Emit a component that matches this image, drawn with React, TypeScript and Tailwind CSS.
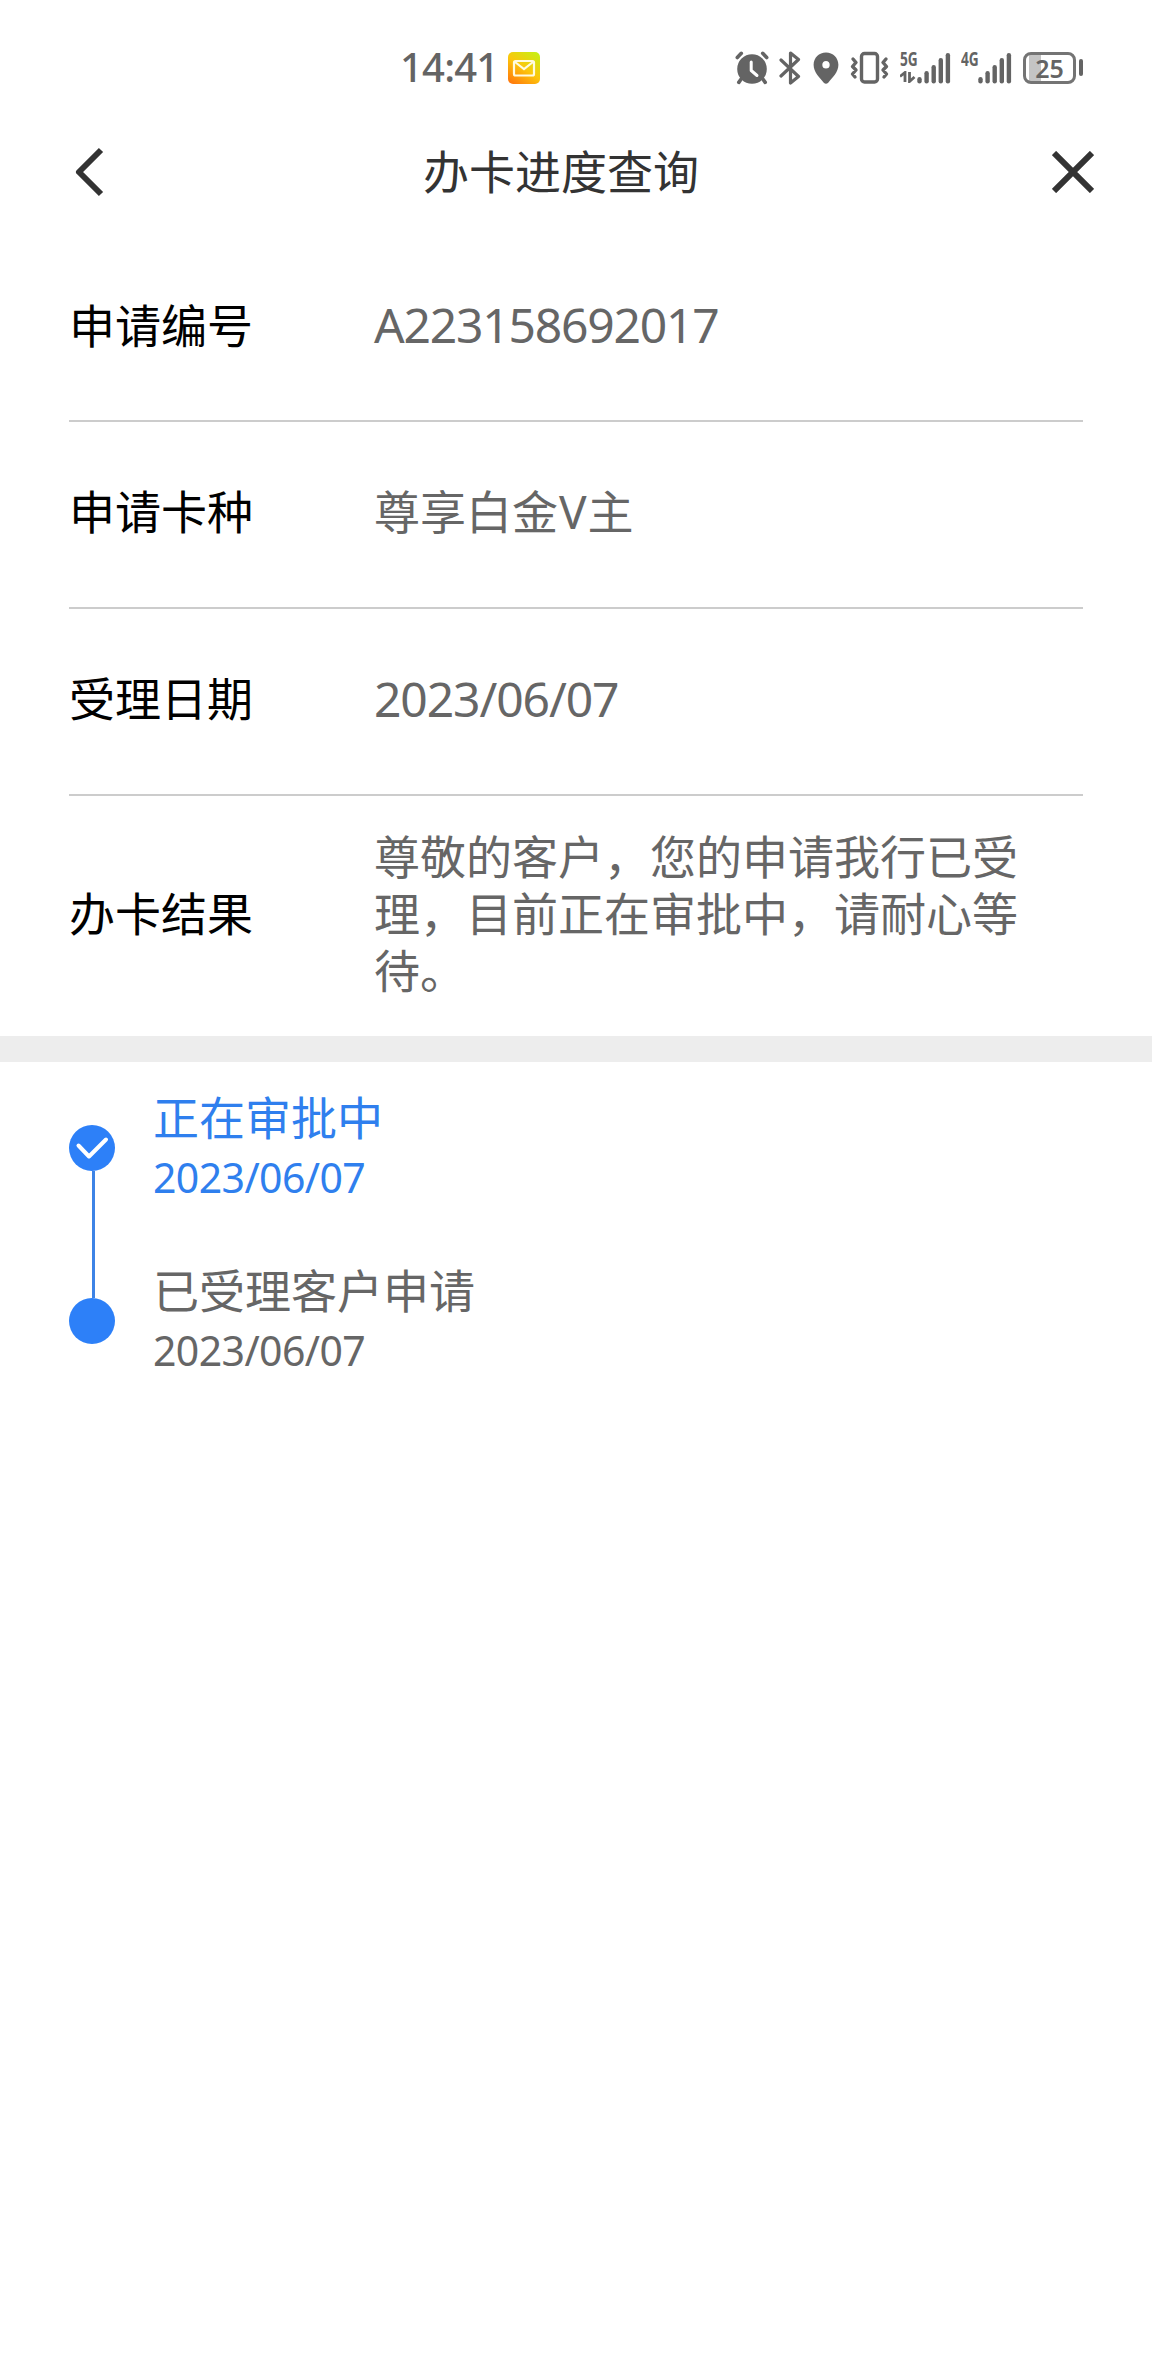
import type { ReactNode } from "react";

const GRAY = "#646464";

function SignalBars({ className }: { className: string }) {
  const tops = [26, 20, 14, 7, 2];
  return (
    <svg className={className} width="34" height="34" viewBox="0 0 34 34" fill="none" stroke={GRAY} strokeWidth="4.4" strokeLinecap="round">
      {tops.map((top, i) => (
        <path key={top} d={`M${2.5 + i * 7.1} ${top + 2.2}V30.2`} />
      ))}
    </svg>
  );
}

function StatusBar() {
  return (
    <div className="flex h-[135px] items-center pl-[400px] text-[#646464]">
      <div className="w-[108px] pb-[2px] text-[40px] leading-[40px] font-medium tracking-[-0.8px]">14:41</div>
      <svg width="32" height="32" viewBox="0 0 32 32" className="mr-[195px]">
        <defs>
          <linearGradient id="mail" x1="0.15" y1="1" x2="0.85" y2="0">
            <stop offset="0" stopColor="#ff7a0c" />
            <stop offset="0.5" stopColor="#fcc60c" />
            <stop offset="1" stopColor="#c8ee14" />
          </linearGradient>
        </defs>
        <rect width="32" height="32" rx="5" fill="url(#mail)" />
        <rect x="6" y="9" width="20" height="14.5" rx="1.5" fill="none" stroke="#fffbe0" strokeWidth="2.2" />
        <path d="M7 10l9 7 9-7" fill="none" stroke="#fffbe0" strokeWidth="2.2" />
      </svg>
      <svg width="34" height="34" viewBox="0 0 34 34" className="mr-[10px]">
        <circle cx="17" cy="18" r="14.8" fill={GRAY} />
        <path d="M2.3 6.500l4-4.200M31.700 6.500l-4-4.200M6.200 28l-2.400 3.400M27.800 28l2.400 3.400" stroke={GRAY} strokeWidth="3.6" strokeLinecap="round" />
        <path d="M16.2 11v8.5l5.8 5" fill="none" stroke="#fff" strokeWidth="3" strokeLinecap="round" strokeLinejoin="round" />
      </svg>
      <svg width="22" height="34" viewBox="0 0 22 34" className="mr-[12px]" fill="none" stroke={GRAY} strokeWidth="3.2" strokeLinecap="round" strokeLinejoin="round">
        <path d="M2 9l17.5 16.5L11.5 32V2l8 6.5L2 25" />
      </svg>
      <svg width="26" height="34" viewBox="0 0 26 34" className="mr-[11px]">
        <path fillRule="evenodd" fill={GRAY} d="M13 1.500C6 1.500.6 6.800.6 13.700c0 7.600 6.100 12.800 10.200 18q2.200 2 4.400 0c4.100-5.200 10.200-10.400 10.200-18C25.400 6.800 20 1.500 13 1.500zm0 8.500c2.200 0 3.700 1.700 3.700 3.900S15.200 17.500 13 17.500s-3.700-1.400-3.700-3.600S10.800 10 13 10z" />
      </svg>
      <svg width="40" height="34" viewBox="0 0 40 34" className="mr-[10px]" fill="none" stroke={GRAY} strokeWidth="3.4" strokeLinejoin="round" strokeLinecap="round">
        <rect x="11.5" y="2.500" width="16" height="28.5" rx="3" />
        <path d="M3 8l3 3.500L2.500 15.500 6 19l-3.500 4L5 26M36 8l-3 3.500 3.500 4L33 19l3.500 4L34 26" />
      </svg>
      <div className="relative h-[34px] w-[17px]">
        <span className="absolute top-[1px] left-0 origin-left scale-x-[0.72] text-[19px] leading-[14px] font-bold">5G</span>
        <svg width="16" height="12" viewBox="0 0 16 12" className="absolute top-[20px] left-0" fill="none" stroke={GRAY} strokeWidth="2.8">
          <path d="M0 5.5l5-4V11M9.500 1v9.500l5-4.500" />
        </svg>
      </div>
      <SignalBars className="mr-[10px]" />
      <div className="relative h-[34px] w-[17px]">
        <span className="absolute top-[1px] left-0 origin-left scale-x-[0.72] text-[19px] leading-[14px] font-bold">4G</span>
      </div>
      <SignalBars className="mr-[11px]" />
      <div className="flex items-center gap-[3px]">
        <div className="flex h-[32px] w-[53px] items-center justify-center rounded-[8px] border-3 border-[#747474] bg-[linear-gradient(90deg,#fff_3px,#c4c4c4_3px,#c4c4c4_15px,#fff_15px)] text-[25px] leading-[26px] font-semibold">
          25
        </div>
        <div className="h-[17px] w-[4px] rounded-full bg-[#646464]" />
      </div>
    </div>
  );
}

function NavBar() {
  return (
    <div className="flex h-[74px] items-center">
      <svg width="32" height="52" viewBox="0 0 32 52" className="ml-[74px]" fill="none" stroke="#333" strokeWidth="6" strokeLinejoin="round">
        <path d="M27 4L5 26l22 22" />
      </svg>
      <h1 className="ml-[317px] w-[276px] pb-[2px] text-[46px] leading-[58px] whitespace-nowrap text-[#333]">办卡进度查询</h1>
      <svg width="42" height="42" viewBox="0 0 42 42" className="ml-[353px]" stroke="#333" strokeWidth="6">
        <path d="M2 2l38 38M40 2L2 40" />
      </svg>
    </div>
  );
}

function Row({ label, children, className }: { label: string; children: ReactNode; className: string }) {
  return (
    <div className={`mx-[69px] flex items-center ${className}`}>
      <div className="w-[305px] text-[46px] leading-[57px] text-black">{label}</div>
      <div className="w-[660px] text-[46px] leading-[57px] text-[#666]">{children}</div>
    </div>
  );
}

function Step({ title, date, color }: { title: string; date: string; color: string }) {
  return (
    <div className={`h-[173px] ${color}`}>
      <div className="text-[46px] leading-[60px]">{title}</div>
      <div className="text-[41px] leading-[60px] tracking-[-0.6px]">{date}</div>
    </div>
  );
}

export default function App() {
  return (
    <div className="min-h-[2376px] w-[1152px] bg-white font-['Noto_Sans','Noto_Sans_CJK_SC',sans-serif]">
      <StatusBar />
      <NavBar />
      <main className="pt-[24px]">
        <Row label="申请编号" className="h-[189px] border-b-2 border-[#ccc] pb-[3px]">
          <span className="text-[48px] tracking-[-1.2px]">A223158692017</span>
        </Row>
        <Row label="申请卡种" className="h-[187px] border-b-2 border-[#ccc] pb-[6px]">
          尊享白金<span className="px-[1px]">V</span>主
        </Row>
        <Row label="受理日期" className="h-[187px] border-b-2 border-[#ccc] pb-[6px]">
          <span className="text-[48px] tracking-[-1.1px]">2023/06/07</span>
        </Row>
        <Row label="办卡结果" className="h-[240px] pb-[6px]">尊敬的客户，您的申请我行已受理，目前正在审批中，请耐心等待。</Row>
        <div className="h-[26px] bg-[#ededed]" />
        <section className="flex pl-[69px]">
          <div className="mt-[63px] flex w-[46px] flex-col items-center">
            <div className="flex h-[46px] w-[46px] items-center justify-center rounded-full bg-[#2d80f8]">
              <svg width="34" height="24" viewBox="0 0 34 24" fill="none" stroke="#fff" strokeWidth="4" strokeLinecap="round" strokeLinejoin="round">
                <path d="M3.5 9.5L14 20.5 31 3.5" />
              </svg>
            </div>
            <div className="ml-[3px] h-[127px] w-[3px] bg-[#3d83e6]" />
            <div className="h-[46px] w-[46px] rounded-full bg-[#2d80f8]" />
          </div>
          <div className="ml-[38px] pt-[25px]">
            <Step title="正在审批中" date="2023/06/07" color="text-[#2f7fee]" />
            <Step title="已受理客户申请" date="2023/06/07" color="text-[#666]" />
          </div>
        </section>
      </main>
    </div>
  );
}
